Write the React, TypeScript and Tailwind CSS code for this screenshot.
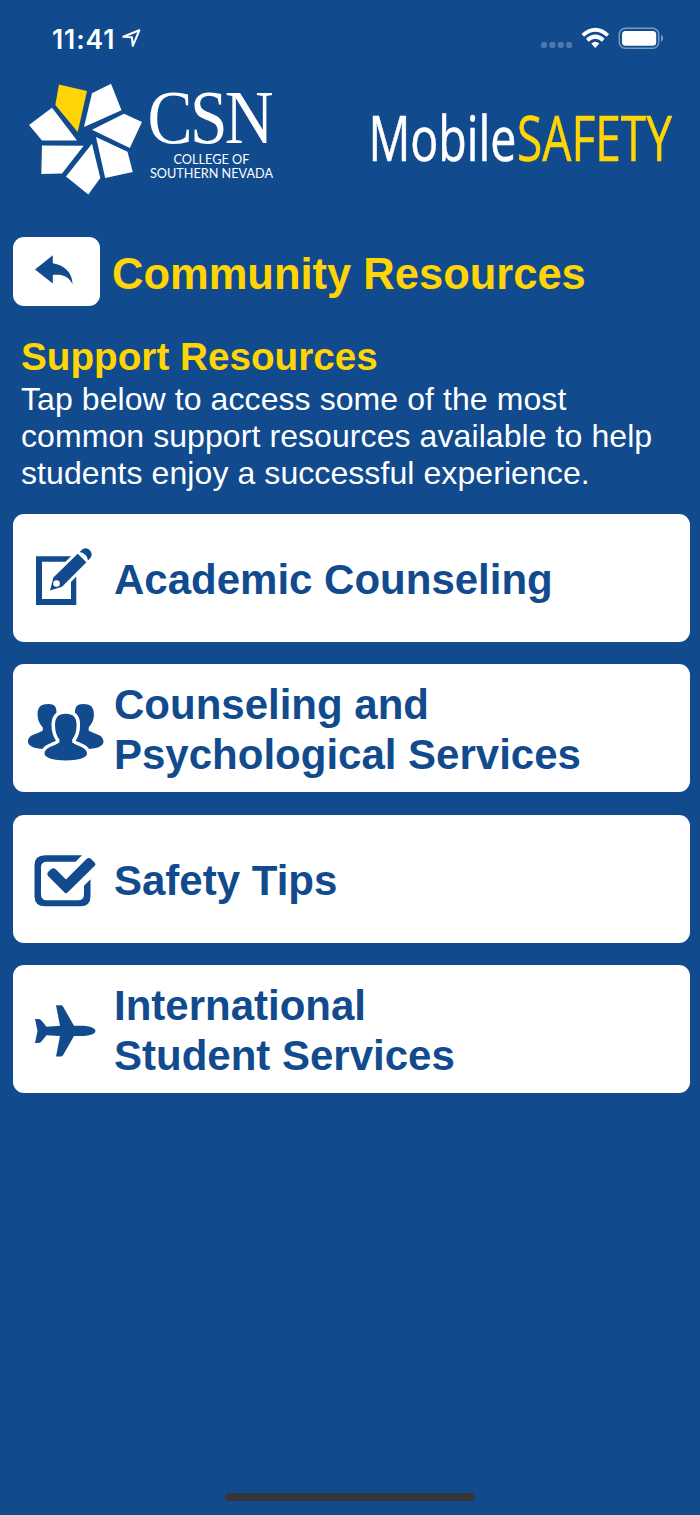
import type { ReactNode } from "react";

function StatusBar() {
  return (
    <div className="flex h-[76px] items-center justify-between pl-[52px] pr-[37px]">
      <div className="flex items-center">
        <span className="w-[65px] whitespace-nowrap pt-[2px] font-['Inter',sans-serif] text-[26.5px] font-semibold leading-[30px] tracking-[0.9px] text-white">
          11:41
        </span>
        <svg className="ml-[4px] h-[20px] w-[20px]" viewBox="121 28.5 20 20" fill="none" stroke="white" strokeWidth="2.1" strokeLinejoin="round">
          <path d="M123.3 37.2 139.3 30.8 132.8 46.3 131.9 37.8Z" />
        </svg>
      </div>
      <svg className="h-[30px] w-[123px]" viewBox="540 23 123 30">
        <g fill="#4c78ab">
          <rect x="541" y="42" width="6" height="6" rx="2" />
          <rect x="549.4" y="42" width="6" height="6" rx="2" />
          <rect x="557.8" y="42" width="6" height="6" rx="2" />
          <rect x="566.2" y="42" width="6" height="6" rx="2" />
        </g>
        <g fill="none" stroke="white" strokeWidth="3.9">
          <path d="M582.8 35.4Q595.3 24.2 607.8 35.4" />
          <path d="M587.3 40.2Q595.3 33.1 603.3 40.2" />
        </g>
        <path fill="white" d="M591.3 43.4Q595.3 40.2 599.3 43.4L595.8 47.4Q595.3 48 594.8 47.4Z" />
        <rect x="619.3" y="28.3" width="39.4" height="20" rx="6" fill="none" stroke="#7899c0" strokeWidth="1.5" />
        <rect x="622" y="31" width="34.2" height="14.7" rx="3.5" fill="white" />
        <path fill="#7899c0" d="M661 34.8Q663.2 36 663.2 38.3T661 41.8Z" />
      </svg>
    </div>
  );
}

function CollegeLogo() {
  return (
    <svg className="h-[125px] w-[260px] overflow-visible" viewBox="20 76 260 125" fill="white" aria-label="College of Southern Nevada">
      <path fill="#ffd505" d="M59 84.5 87 91 77.7 132 55.3 105Z" />
      <path d="M111 83.8 121.5 110.3 84 127 92 93.3Z" />
      <path d="M124 113.8 142 122 129.8 148 92 129.8Z" />
      <path d="M96 137 127.5 151.8 132.8 172 105.2 178Z" />
      <path d="M92 143.7 100.3 178 88.3 194.5 66 176.5Z" />
      <path d="M42 145.5 83.7 145.7 62 173.5 41.3 174Z" />
      <path d="M52 107.8 77 140.5 42 140.5 29 125Z" />
      <text x="147.5" y="142.7" fontFamily="Liberation Serif, serif" fontSize="76" textLength="123.5" letterSpacing="-3" lengthAdjust="spacingAndGlyphs">CSN</text>
      <text x="173.5" y="164" fontFamily="Lato, sans-serif" fontSize="14" textLength="76" lengthAdjust="spacingAndGlyphs">COLLEGE OF</text>
      <text x="150" y="178" fontFamily="Lato, sans-serif" fontSize="14" textLength="123" lengthAdjust="spacingAndGlyphs">SOUTHERN NEVADA</text>
    </svg>
  );
}

function MobileSafetyLogo() {
  return (
    <svg className="h-[90px] w-[315px]" viewBox="365 93 315 90" fontFamily="Open Sans, sans-serif" fontSize="62.5" strokeWidth="0.6" aria-label="MobileSAFETY">
      <text x="368.5" y="161" fill="white" stroke="white" fontWeight="500" textLength="148" lengthAdjust="spacingAndGlyphs">Mobile</text>
      <text x="517" y="161" fill="#ffd505" stroke="#ffd505" fontWeight="500" textLength="155" lengthAdjust="spacingAndGlyphs">SAFETY</text>
    </svg>
  );
}

function EditIcon() {
  return (
    <svg className="h-[90px] w-[101px]" viewBox="13 533 101 90" fill="#114b8e">
      <path d="M36 556.2H71L65.5 561.8H42V599H71V582L76.3 576.5V605H36Z" />
      <path d="M50 590.5 53.4 577.5 77.7 553.8 86.4 562.3 62 586.8Z" />
      <path d="M79.5 552 82.3 549.5Q86 546.6 89.6 550Q93.3 554 90.5 557.8L88 560.5Q87.3 553.5 79.5 552Z" />
      <circle cx="56.5" cy="583.5" r="3.3" fill="white" />
    </svg>
  );
}

function PeopleIcon() {
  const person =
    "M48.5 704.3C54.5 704.3 56.5 707 56.5 713C56.5 720 55 723.5 52.5 727.5V730C56 733.8 68 734 68 742C68 747 58 749.5 46.5 749.5C35 749.5 28 747 28 742C28 734.5 39 734.3 42.8 731V728C39 723.5 37.6 720 37.6 714.5C37.6 707 41 704.3 48.5 704.3Z";
  return (
    <svg className="h-[90px] w-[101px]" viewBox="13 683.4 101 90" fill="#114b8e">
      <path d={person} />
      <path d={person} transform="matrix(-1 0 0 1 131.5 0)" />
      <path
        stroke="white"
        strokeWidth="7"
        strokeLinejoin="round"
        paintOrder="stroke"
        d="M65.8 714.2C73.3 714.2 76.6 718 76.6 725.5C76.6 732 74.8 736.5 72.2 740V743C76 746.2 87 747.5 87 754C87 758.7 77 760.9 65.8 760.9S44.5 758.7 44.5 754C44.5 747.5 55.6 746.2 59.4 743V740C56.8 736.5 55 732 55 725.5C55 718 58.3 714.2 65.8 714.2Z"
      />
    </svg>
  );
}

function CheckIcon() {
  return (
    <svg className="h-[90px] w-[101px]" viewBox="13 833.8 101 90" fill="#114b8e">
      <path d="M45 855H82L75.5 861.5H47Q41 861.5 41 867V894Q41 900 47 900H78Q84 900 84 894V885.5L90.5 879V896Q90.5 906 80.5 906H45Q34.5 906 34.5 896V865Q34.5 855 45 855Z" />
      <path d="M48.3 871.5 51 869Q53.5 867 56 869.3L66 879.3 86.5 858.9Q89 856.7 91.3 859L95 862.7Q96 864 95 865.3L67.5 892.2Q66 893.7 64.5 892.2L48.3 876Q46.3 873.7 48.3 871.5Z" />
    </svg>
  );
}

function PlaneIcon() {
  return (
    <svg className="h-[90px] w-[101px]" viewBox="13 984 101 90" fill="#114b8e">
      <path d="M56 1005.3H61.5L63 1006.5 74 1025.8H84Q95.5 1027 95.5 1031T84 1036.1H74L63 1055.3 61.5 1056.5H56L60 1036.1 46.5 1035.2 41 1042 39 1043H35L37.5 1031 35 1019H39L41 1020 46.5 1026.8 60 1025.8Z" />
    </svg>
  );
}

function ResourceCard({ icon, children }: { icon: ReactNode; children: ReactNode }) {
  return (
    <button className="flex h-[128px] w-full items-center rounded-[11px] bg-white text-left font-bold leading-[50px] text-[#114b8e]">
      {icon}
      <span className="pt-[4px] text-[42px]">{children}</span>
    </button>
  );
}

export default function App() {
  return (
    <main className="flex h-[1515px] w-[700px] flex-col bg-[#114b8e] font-['Liberation_Sans',Arial,sans-serif]">
      <StatusBar />
      <header className="flex h-[125px] items-start justify-between pl-5 pr-[20px]">
        <CollegeLogo />
        <div className="pt-[17px]">
          <MobileSafetyLogo />
        </div>
      </header>
      <div className="mt-9 flex h-[69px] items-center gap-[12px] pl-[13px] text-[#ffd505]">
        <button aria-label="Back" className="flex h-[69px] w-[87px] items-center justify-center rounded-[11px] bg-white">
          <svg className="h-[69px] w-[87px]" viewBox="13 237 87 69" fill="#114b8e">
            <path d="M35 269.5 52.8 255.2V263.2C64 265 72.5 272 72.5 284.5C69 276 62 274 52.8 275V283.5Z" />
          </svg>
        </button>
        <h1 className="whitespace-nowrap pt-[5px] text-[43.5px] font-bold leading-[50px]">Community Resources</h1>
      </div>
      <section className="mt-[28px] h-[180px] pl-[21px]">
        <h2 className="mb-[2px] text-[38.7px] font-bold leading-[45px] text-[#ffd505]">Support Resources</h2>
        <p className="text-[32px] leading-[37px] tracking-[0.08px] text-white">
          Tap below to access some of the most
          <br />
          common support resources available to help
          <br />
          students enjoy a successful experience.
        </p>
      </section>
      <nav className="flex flex-col gap-[22.4px] pl-[13px] pr-[10px]">
        <ResourceCard icon={<EditIcon />}>Academic Counseling</ResourceCard>
        <ResourceCard icon={<PeopleIcon />}>
          Counseling and
          <br />
          Psychological Services
        </ResourceCard>
        <ResourceCard icon={<CheckIcon />}>Safety Tips</ResourceCard>
        <ResourceCard icon={<PlaneIcon />}>
          International
          <br />
          Student Services
        </ResourceCard>
      </nav>
      <div className="mb-[14px] ml-[225px] mt-auto h-2 w-[250px] rounded-full bg-[#363636]" />
    </main>
  );
}
